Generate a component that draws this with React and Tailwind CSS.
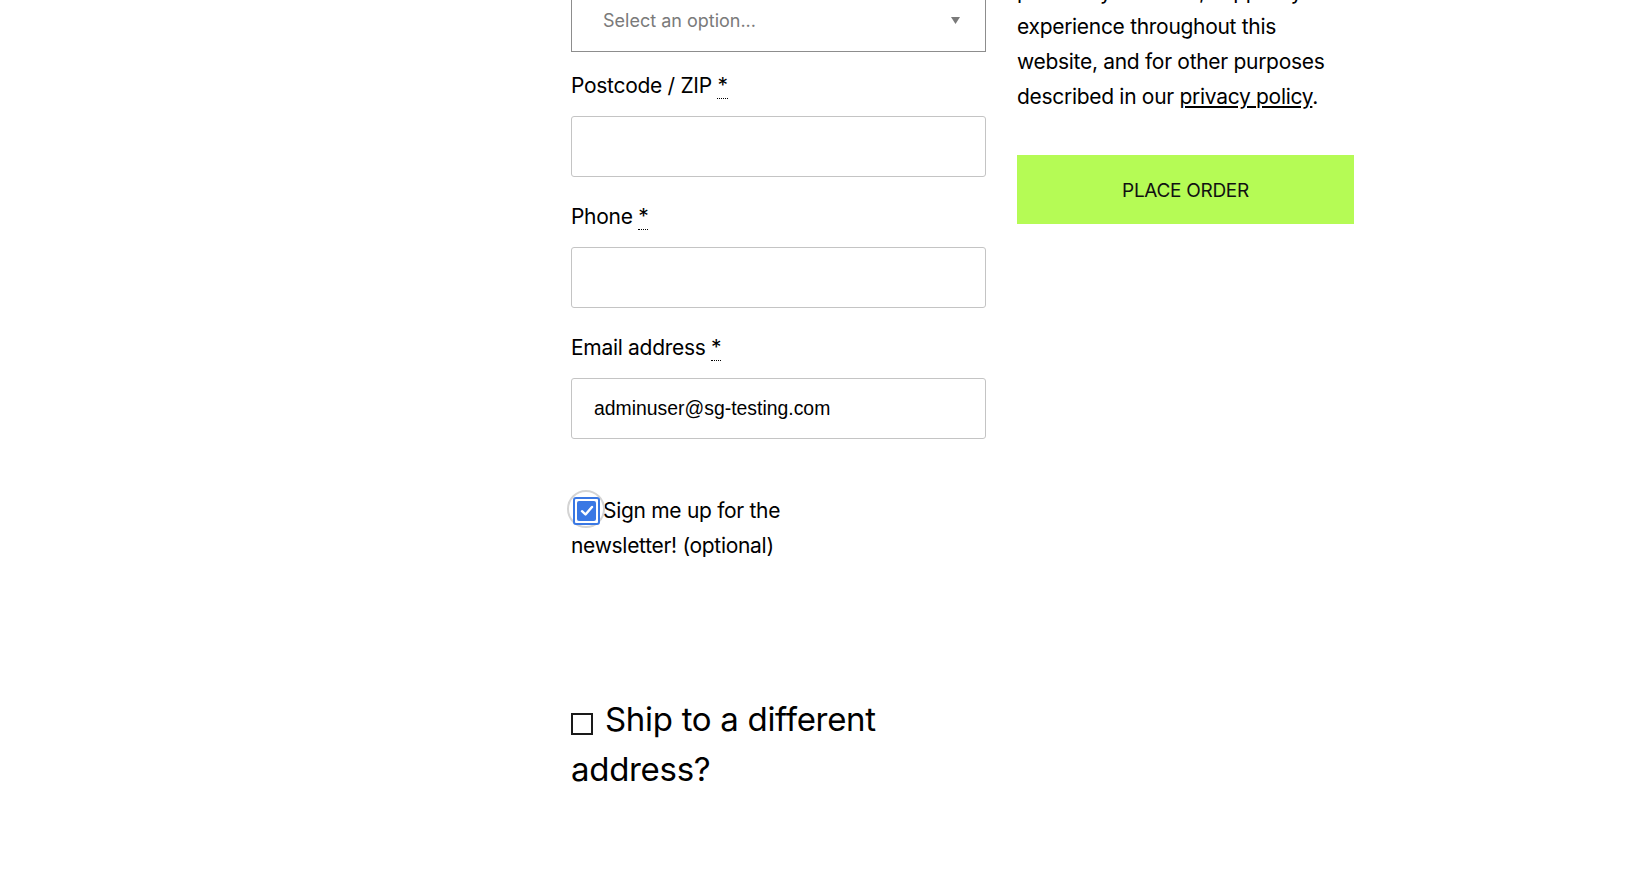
import React from 'react';

function Req() {
  return (
    <abbr title="required" className="no-underline border-b border-dotted border-black">*</abbr>
  );
}

function Field({ label, value, first = false }) {
  return (
    <div className={first ? 'mt-[16px]' : 'mt-[22px]'}>
      <label className="block h-[35px] leading-[35px] text-[21px] text-black">
        {label} <Req />
      </label>
      <div className="mt-[13px] h-[61px] border border-[#c4c4c4] rounded-[3px] bg-white flex items-center pl-[22px] font-['Liberation_Sans',Arial,sans-serif] text-[19.4px] tracking-normal text-black">
        {value}
      </div>
    </div>
  );
}

export default function App() {
  return (
    <div className="min-h-[876px] h-[876px] overflow-hidden bg-white font-['Inter',sans-serif] tracking-[-0.3px] text-black">
      <div className="ml-[571px] flex gap-[31px]">
        {/* billing fields */}
        <div className="w-[415px]">
          <div className="-mt-[10px] h-[62px] border border-[#8d8d8d] bg-white flex items-center justify-between pl-[31px] pr-[25px]">
            <span className="text-[18px] tracking-normal text-[#7a7a7a] -mt-[2px]">Select an option...</span>
            <svg width="9" height="7" viewBox="0 0 9 7" className="mt-[-2px]">
              <path d="M0 0 L9 0 L4.5 7 Z" fill="#7a7a7a" />
            </svg>
          </div>
          <Field label="Postcode / ZIP" first />
          <Field label="Phone" />
          <Field label="Email address" value="adminuser@sg-testing.com" />

          <div className="mt-[54px] text-[21px] leading-[35px]">
            <span className="relative inline-block align-[-7px] ml-[2px] mr-[3px] w-[27px] h-[28px]">
              <span className="absolute left-[-6px] top-[-7px] w-[38px] h-[38px] rounded-full border-2 border-[#d4d4d4]" />
              <span className="absolute inset-0 block rounded-[3px] border-2 border-[#3a78e4] bg-white p-[2px]">
                <span className="flex items-center justify-center w-full h-full rounded-[2px] bg-[#3a78e4]">
                  <svg width="14" height="12" viewBox="0 0 14 12">
                    <path d="M2 6.2 L5.5 9.5 L12 2" stroke="white" strokeWidth="2.4" fill="none" strokeLinecap="round" strokeLinejoin="round" />
                  </svg>
                </span>
              </span>
            </span>
            Sign me up for the
            <br />
            newsletter! (optional)
          </div>

          <h3 className="mt-[131px] text-[33px] leading-[50px] font-normal">
            <span className="inline-block align-[-4px] w-[22px] h-[22px] border-2 border-[#1a1a1a] mr-[3px]" /> Ship to a different
            <br />
            address?
          </h3>
        </div>

        {/* order review */}
        <div className="w-[337px]">
          <p className="-mt-[26px] text-[21px] leading-[35px]">
            process your order, support your
            <br />
            experience throughout this
            <br />
            website, and for other purposes
            <br />
            described in our <a href="#" className="underline text-black">privacy policy</a>.
          </p>
          <button className="mt-[41px] w-full h-[69px] pt-[3px] bg-[#b5fb55] text-[19px] text-[#111] uppercase">
            Place order
          </button>
        </div>
      </div>
    </div>
  );
}
